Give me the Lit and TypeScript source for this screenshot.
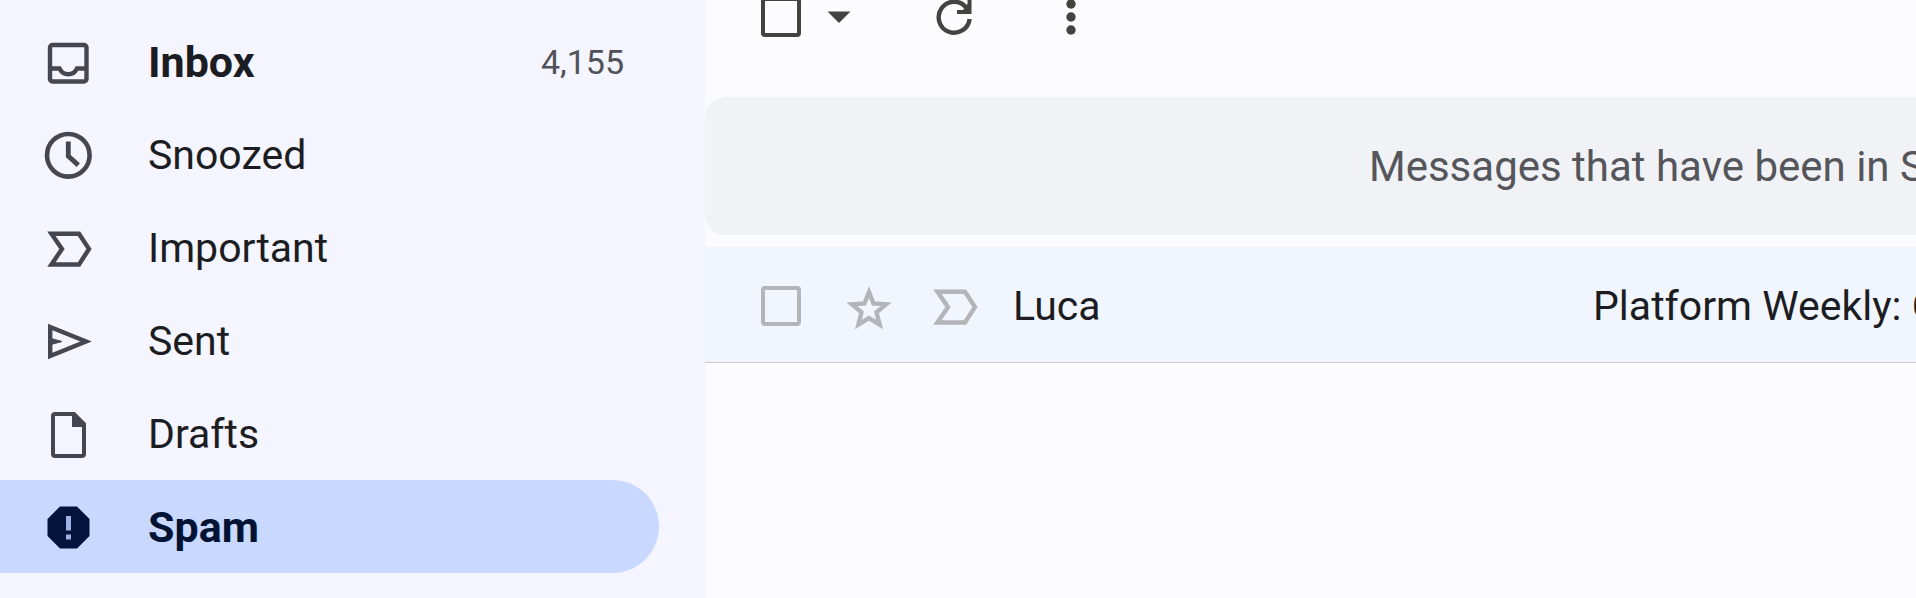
import { LitElement, html, svg, css } from "lit";
import { customElement, property } from "lit/decorators.js";

const marker = svg`<path d="M2.4 2.2H30L40 17.5L30 33H2.4L13 17.5Z" fill="none" stroke="currentColor" stroke-width="4.400"/>`;

const icons: Record<string, unknown> = {
  inbox: svg`<svg class="icon" viewBox="-4 -5 48 48" width="48" height="48" aria-hidden="true">
    <rect x="2" y="2" width="36.500" height="36.500" rx="2.500" fill="none" stroke="currentColor" stroke-width="4.400"/>
    <path d="M3 25.500H11.500C13.500 29.500 16.500 31.300 20.200 31.300S27 29.500 29 25.500H38" fill="none" stroke="currentColor" stroke-width="4.400"/></svg>`,
  snoozed: svg`<svg class="icon" viewBox="-0.300 -0.600 48 48" width="48" height="48" aria-hidden="true">
    <circle cx="24" cy="23.700" r="21.300" fill="none" stroke="currentColor" stroke-width="4.600"/>
    <path d="M24 10V24.500L34 33.500" fill="none" stroke="currentColor" stroke-width="4.800"/></svg>`,
  important: svg`<svg class="icon" viewBox="-5 -7.500 48 48" width="48" height="48" aria-hidden="true">${marker}</svg>`,
  sent: svg`<svg class="icon" viewBox="-4 -7 48 48" width="48" height="48" aria-hidden="true">
    <path d="M2.200 3L38 17.500L2.200 32Z" fill="none" stroke="currentColor" stroke-width="4.400"/>
    <path d="M3 14.500L14 17.500L3 20.500Z" fill="currentColor" stroke="currentColor"/></svg>`,
  drafts: svg`<svg class="icon" viewBox="-7 -1 48 48" width="48" height="48" aria-hidden="true">
    <path d="M4 3H23L33 13V43Q33 45 31 45H4Q2 45 2 43V5Q2 3 4 3Z" fill="none" stroke="currentColor" stroke-width="4"/>
    <path d="M21 2V16H34V13L24 2Z" fill="currentColor"/></svg>`,
  spam: svg`<svg class="icon" viewBox="-3.500 -3.500 48 48" width="48" height="48" aria-hidden="true">
    <path d="M12.500 0H29.500L42 12.500V29.500L29.500 42H12.500L0 29.500V12.500Z" fill="currentColor"/>
    <path d="M18.500 9.500H23.500V24H18.500ZM18.500 28H23.500V33H18.500Z" fill="#9fb2e6"/></svg>`,
};

@customElement("nav-item")
class NavItem extends LitElement {
  @property() label = "";
  @property() icon = "";
  @property() count = "";
  @property({ type: Boolean }) bold = false;
  @property({ type: Boolean }) current = false;

  static styles = css`
    :host { display: block; }
    .item {
      display: flex; align-items: center; box-sizing: border-box;
      height: 93px; padding: 0 35px 0 44px;
      border-radius: 0 47px 47px 0;
      color: #1c1d22; text-decoration: none;
      font-size: 41px; line-height: 48px;
    }
    .icon { flex: none; margin-right: 56px; color: #46464f; }
    .label { flex: 1; }
    .bold { font-size: 43px; font-weight: 700; }
    .current { background: #c9d8fe; color: #001335; }
    .current .icon { color: #04133b; }
    .count { font-size: 34px; font-weight: 400; color: #515259; }
  `;

  render() {
    return html`<a href="#${this.icon}" aria-current=${this.current ? "page" : "false"}
      class="item ${this.bold ? "bold" : ""} ${this.current ? "current" : ""}">
      ${icons[this.icon]}<span class="label">${this.label}</span>
      ${this.count ? html`<span class="count">${this.count}</span>` : ""}
    </a>`;
  }
}

@customElement("app-root")
class AppRoot extends LitElement {
  static styles = css`
    :host {
      display: flex; min-height: 100vh; overflow: hidden;
      font-family: Roboto, "Liberation Sans", sans-serif;
      background: #fcfcfe; color: #1c1d22;
    }
    .sidebar {
      flex: none; box-sizing: border-box; width: 705px;
      padding: 15px 46px 0 0; background: #f4f5fe;
    }
    .main { flex: 1; min-width: 0; overflow: hidden; }
    .toolbar {
      display: flex; align-items: center; height: 40px;
      margin-top: -3px; padding-left: 56px; color: #43433f;
    }
    .check {
      appearance: none; flex: none; box-sizing: border-box;
      width: 40px; height: 40px; margin: 0; color: #43433f;
      border: 4px solid currentColor; border-radius: 4px;
    }
    .button {
      display: flex; align-items: center; justify-content: center;
      flex: none; height: 40px; padding: 0; border: 0;
      background: none; color: inherit;
    }
    .arrow { width: 24px; margin-left: 26px; }
    .refresh { width: 40px; margin-left: 84px; }
    .more { width: 40px; margin-left: 76px; }
    .banner {
      height: 138px; margin-top: 60px; box-sizing: border-box;
      padding-left: 664px; border-radius: 20px 0 0 20px;
      background: #f1f2f6; color: #55565b;
      font-size: 42px; line-height: 140px;
      white-space: nowrap; overflow: hidden;
    }
    .row {
      display: flex; align-items: center; height: 113px;
      margin-top: 12px; padding: 2px 0 0 56px;
      background: #f1f6fe; border-bottom: 1px solid #c9cacd;
      font-size: 41px; line-height: 48px; white-space: nowrap;
    }
    .faint { color: #b4b5b8; }
    .star { width: 48px; margin-left: 44px; }
    .marker { width: 48px; margin-left: 38px; }
    .sender { flex: none; width: 580px; margin-left: 34px; }
    .subject { flex: 1; min-width: 0; overflow: hidden; }
  `;

  render() {
    return html`
      <nav class="sidebar" aria-label="Mailboxes">
        <nav-item icon="inbox" label="Inbox" count="4,155" bold></nav-item>
        <nav-item icon="snoozed" label="Snoozed"></nav-item>
        <nav-item icon="important" label="Important"></nav-item>
        <nav-item icon="sent" label="Sent"></nav-item>
        <nav-item icon="drafts" label="Drafts"></nav-item>
        <nav-item icon="spam" label="Spam" bold current></nav-item>
      </nav>
      <main class="main">
        <div class="toolbar" role="toolbar">
          <input class="check" type="checkbox" aria-label="Select all">
          <button class="button arrow" aria-label="Select options">
            <svg viewBox="0 0 24 12" width="24" height="12"><path d="M0.500 0.500H23.500L12 12Z" fill="currentColor"/></svg>
          </button>
          <button class="button refresh" aria-label="Refresh">
            <svg viewBox="0 0 40 40" width="40" height="40">
              <path d="M34.600 22A15.500 15.500 0 1 1 31 10.200L33 13" fill="none" stroke="currentColor" stroke-width="4.400"/>
              <path d="M36.500 1V17H22V13H28L32.500 7V1Z" fill="currentColor"/></svg>
          </button>
          <button class="button more" aria-label="More">
            <svg viewBox="0 0 40 40" width="40" height="40" fill="currentColor">
              <circle cx="20" cy="7" r="4.700"/><circle cx="20" cy="20" r="4.700"/><circle cx="20" cy="33" r="4.700"/></svg>
          </button>
        </div>
        <div class="banner">Messages that have been in Spam</div>
        <div class="row">
          <input class="check faint" type="checkbox" aria-label="Select message from Luca">
          <button class="button star faint" aria-label="Star">
            <svg viewBox="0 0 48 48" width="48" height="48">
              <path transform="translate(0 4)" d="M24 6L28.500 17.500L41 18.400L31.500 26.300L34.600 38.500L24 32L13.400 38.500L16.500 26.300L7 18.400L19.500 17.500Z" fill="none" stroke="currentColor" stroke-width="4.400"/></svg>
          </button>
          <button class="button marker faint" aria-label="Mark as important">
            <svg viewBox="-4 -7.500 48 48" width="48" height="48">${marker}</svg>
          </button>
          <span class="sender">Luca</span>
          <span class="subject">Platform Weekly: C</span>
        </div>
      </main>`;
  }
}
